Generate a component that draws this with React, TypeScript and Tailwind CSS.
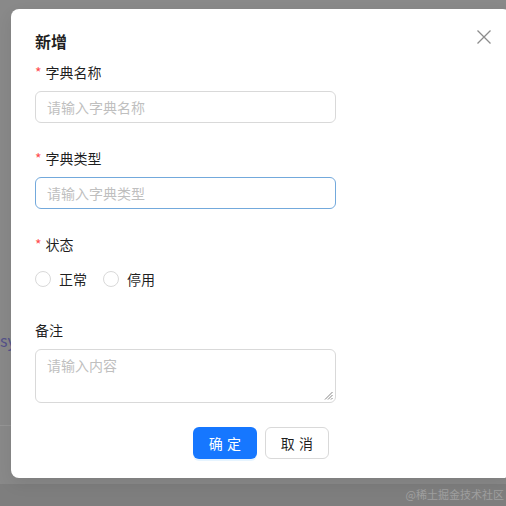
import React from "react";

const font = { fontFamily: '"Noto Sans CJK SC", "Microsoft YaHei", "Noto Sans", sans-serif' };

function Label({ text, required }: { text: string; required?: boolean }) {
  return (
    <div className="flex h-[22px] items-center pb-0 mb-2 text-[14px] leading-[22px] text-[rgba(0,0,0,0.88)]">
      {required && <span className="mr-[4px] text-[14px] text-[#ff4d4f] leading-none">*</span>}
      <span>{text}</span>
    </div>
  );
}

function Radio({ text }: { text: string }) {
  return (
    <div className="flex items-center mr-[8px]">
      <span className="w-4 h-4 rounded-full border border-[#d9d9d9] bg-white" />
      <span className="px-2 text-[14px] text-[rgba(0,0,0,0.88)]">{text}</span>
    </div>
  );
}

export default function App() {
  return (
    <div className="relative w-[506px] h-[506px] overflow-hidden bg-[#898989]" style={font}>
      {/* background remnants */}
      <div className="absolute left-0 top-[331px] text-[16px] text-[#55528a] leading-[18px]">sy</div>
      <div className="absolute left-0 top-[425px] w-[11px] h-px bg-[#959595]" />
      <div className="absolute left-0 top-[484px] w-full h-[22px] bg-[#7e7e7e]" />
      <div className="absolute right-[2px] top-[487px] text-[11px] text-[#a0a0a0] leading-[14px]">@稀土掘金技术社区</div>

      {/* modal */}
      <div className="absolute left-[11px] top-[9px] w-[500px] h-[469px] bg-white rounded-[8px] shadow-[0_6px_16px_rgba(0,0,0,0.08)] px-6 pt-5 pb-5">
        <button className="absolute right-[16px] top-[17px] w-[22px] h-[22px] flex items-center justify-center text-[#8c8c8c]">
          <svg width="16" height="16" viewBox="0 0 16 16" fill="none" stroke="currentColor" strokeWidth="1.3">
            <path d="M1.5 1.5 L14.5 14.5 M14.5 1.5 L1.5 14.5" />
          </svg>
        </button>
        <div className="text-[16px] leading-[24px] font-semibold text-[rgba(0,0,0,0.88)] mb-2">新增</div>

        <div className="w-[301px]">
          <div className="mb-6">
            <Label text="字典名称" required />
            <div className="h-8 rounded-[6px] border border-[#d9d9d9] px-[11px] flex items-center text-[14px] text-[#bfbfbf]">
              请输入字典名称
            </div>
          </div>
          <div className="mb-6">
            <Label text="字典类型" required />
            <div className="h-8 rounded-[6px] border border-[#73a9dc] px-[11px] flex items-center text-[14px] text-[#bfbfbf]">
              请输入字典类型
            </div>
          </div>
          <div className="mb-6">
            <Label text="状态" required />
            <div className="h-8 flex items-center">
              <Radio text="正常" />
              <Radio text="停用" />
            </div>
          </div>
          <div className="mb-6">
            <Label text="备注" />
            <div className="relative h-[54px] rounded-[6px] border border-[#d9d9d9] px-[11px] py-[4px] text-[14px] leading-[22px] text-[#bfbfbf]">
              请输入内容
              <svg className="absolute right-[2px] bottom-[2px]" width="9" height="9" viewBox="0 0 9 9" stroke="#777" strokeWidth="0.9">
                <path d="M8.5 1 L1 8.5 M8.5 4 L4 8.5 M8.5 7 L7 8.5" />
              </svg>
            </div>
          </div>
          <div className="flex justify-end gap-2 mr-[7px]">
            <button className="h-8 w-16 rounded-[6px] bg-[#1677ff] text-white text-[14px] shadow-[0_2px_0_rgba(5,145,255,0.1)] tracking-[0.3em] pl-[4px]">
              确定
            </button>
            <button className="h-8 w-16 rounded-[6px] border border-[#d9d9d9] bg-white text-[14px] text-[rgba(0,0,0,0.88)] tracking-[0.3em] pl-[4px]">
              取消
            </button>
          </div>
        </div>
      </div>
    </div>
  );
}
